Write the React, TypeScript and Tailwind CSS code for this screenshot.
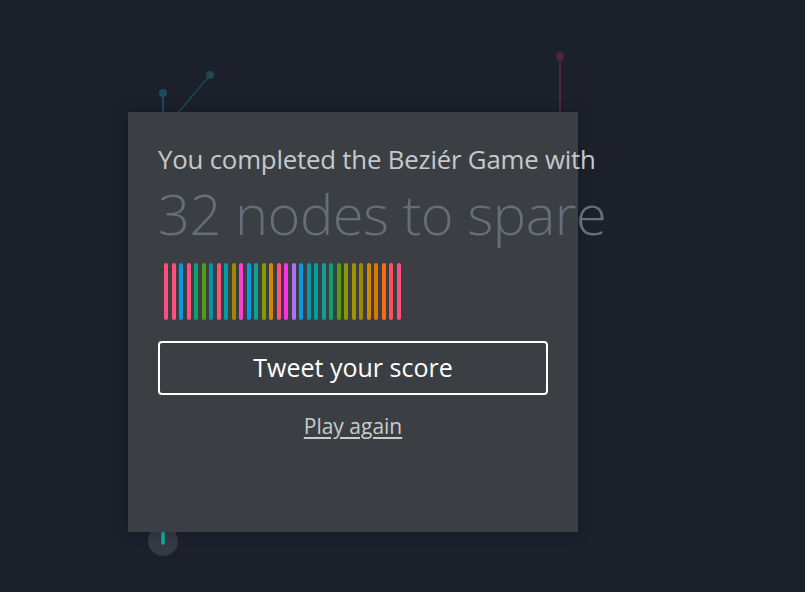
const BARS = [
  "#ff4f7e", "#ff4f7e", "#0a98e0", "#ff4f7e", "#0ea070", "#4fa010", "#0a90a8", "#ff4f7e",
  "#00a0a0", "#a08800", "#ff3fd2", "#0a98e0", "#0ea090", "#889a00", "#d08800", "#ff4f7e",
  "#ff30e0", "#b070f0", "#0a98e0", "#0a98a8", "#00a0a0", "#0ea090", "#10a070", "#50a010",
  "#889a00", "#a09400", "#a08800", "#d08800", "#d87800", "#ff6a10", "#ff5060", "#ff4f7e",
];

export default function App() {
  return (
    <div
      className="relative w-[805px] h-[592px] overflow-hidden bg-[#1c202b]"
      style={{ fontFamily: '"Open Sans", "Noto Sans", sans-serif' }}
    >
      {/* Curve handles behind the dialog */}
      <svg className="absolute inset-0" width="805" height="592">
        <line x1="163" y1="93" x2="163" y2="130" stroke="#1d4a5e" strokeWidth="2" />
        <circle cx="163" cy="93" r="4" fill="#1d4a5e" />
        <line x1="210" y1="75" x2="172" y2="120" stroke="#1c4a52" strokeWidth="1.5" />
        <circle cx="210" cy="75" r="4" fill="#1c4a52" />
        <line x1="560" y1="56" x2="560" y2="130" stroke="#4d2540" strokeWidth="2" />
        <circle cx="560" cy="56" r="4" fill="#4d2540" />
        <circle cx="163" cy="541" r="15" fill="#353943" />
        <line x1="163" y1="525" x2="163" y2="543" stroke="#0ab0a8" strokeWidth="3.5" strokeLinecap="round" />
      </svg>

      <div className="relative pt-[112px] pl-[128px]">
        <div className="w-[450px] h-[420px] bg-[#3b3f43] shadow-[0_0_12px_rgba(0,0,0,0.25)] pl-[30px]">
          <div className="pt-[30px]">
            <p className="text-[25.8px] leading-[34px] text-[#c6c8ca] whitespace-nowrap tracking-[-0.2px]">
              You completed the Beziér Game with
            </p>
            <p className="mt-[5px] text-[56px] leading-[64px] font-light text-[#686d76] whitespace-nowrap tracking-[-0.5px]">
              32 nodes to spare
            </p>
            <div className="mt-[18px] ml-[6px] flex gap-[3.5px] h-[57px]">
              {BARS.map((c, i) => (
                <div key={i} className="w-[4px] h-full rounded-full" style={{ backgroundColor: c }} />
              ))}
            </div>
            <button className="mt-[21px] w-[390px] h-[54px] border-2 border-white rounded-[4px] text-[25px] text-white flex items-center justify-center">
              Tweet your score
            </button>
            <div className="w-[390px] mt-[16px] text-center">
              <a className="text-[21px] text-[#c9cbcd] underline underline-offset-[3px] cursor-pointer">
                Play again
              </a>
            </div>
          </div>
        </div>
      </div>
    </div>
  );
}
